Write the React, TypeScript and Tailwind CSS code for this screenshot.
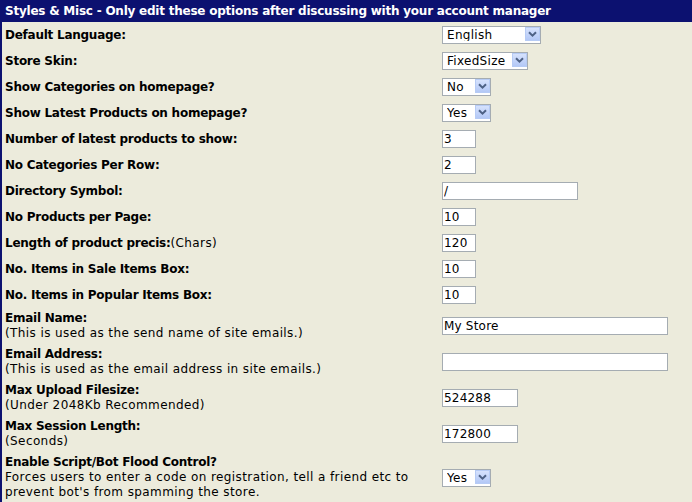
import React from 'react';

type Field =
  | { kind: 'select'; value: string; w: string }
  | { kind: 'input'; value: string; w: string };

interface Row {
  label: string;
  suffix?: string;
  note?: string[];
  field: Field;
}

const rows: Row[] = [
  { label: 'Default Language:', field: { kind: 'select', value: 'English', w: 'w-[99px]' } },
  { label: 'Store Skin:', field: { kind: 'select', value: 'FixedSize', w: 'w-[86px]' } },
  { label: 'Show Categories on homepage?', field: { kind: 'select', value: 'No', w: 'w-[49px]' } },
  { label: 'Show Latest Products on homepage?', field: { kind: 'select', value: 'Yes', w: 'w-[49px]' } },
  { label: 'Number of latest products to show:', field: { kind: 'input', value: '3', w: 'w-[34px]' } },
  { label: 'No Categories Per Row:', field: { kind: 'input', value: '2', w: 'w-[34px]' } },
  { label: 'Directory Symbol:', field: { kind: 'input', value: '/', w: 'w-[136px]' } },
  { label: 'No Products per Page:', field: { kind: 'input', value: '10', w: 'w-[34px]' } },
  { label: 'Length of product precis:', suffix: '(Chars)', field: { kind: 'input', value: '120', w: 'w-[34px]' } },
  { label: 'No. Items in Sale Items Box:', field: { kind: 'input', value: '10', w: 'w-[34px]' } },
  { label: 'No. Items in Popular Items Box:', field: { kind: 'input', value: '10', w: 'w-[34px]' } },
  {
    label: 'Email Name:',
    note: ['(This is used as the send name of site emails.)'],
    field: { kind: 'input', value: 'My Store', w: 'w-[226px]' },
  },
  {
    label: 'Email Address:',
    note: ['(This is used as the email address in site emails.)'],
    field: { kind: 'input', value: '', w: 'w-[226px]' },
  },
  {
    label: 'Max Upload Filesize:',
    note: ['(Under 2048Kb Recommended)'],
    field: { kind: 'input', value: '524288', w: 'w-[76px]' },
  },
  {
    label: 'Max Session Length:',
    note: ['(Seconds)'],
    field: { kind: 'input', value: '172800', w: 'w-[76px]' },
  },
  {
    label: 'Enable Script/Bot Flood Control?',
    note: ['Forces users to enter a code on registration, tell a friend etc to', "prevent bot's from spamming the store."],
    field: { kind: 'select', value: 'Yes', w: 'w-[49px]' },
  },
];

const Select = ({ value, w }: { value: string; w: string }) => (
  <div className={`relative h-[18px] ${w}`}>
    <select
      defaultValue={value}
      className="h-full w-full appearance-none rounded-none border border-[#a5acb2] bg-white pl-[4px] text-[12px] leading-none tracking-[0.3px] text-black outline-none"
    >
      <option>{value}</option>
    </select>
    <span className="pointer-events-none absolute right-px top-px flex h-[14px] w-[15px] items-center justify-center border border-[#b6cbf5] bg-gradient-to-b from-[#d6e2fd] to-[#b3c8f6]">
      <svg width="9" height="6" viewBox="0 0 9 6">
        <path d="M1 1.2 L4.5 4.6 L8 1.2" fill="none" stroke="#4d6185" strokeWidth="2" />
      </svg>
    </span>
  </div>
);

const Input = ({ value, w }: { value: string; w: string }) => (
  <input
    defaultValue={value}
    className={`h-[18px] border border-[#a5acb2] bg-white pl-px text-[12px] leading-none tracking-[0.2px] text-black outline-none ${w}`}
  />
);

export default function App() {
  return (
    <div className="h-[502px] w-[692px] overflow-hidden border-l-2 border-[#0c1170] bg-[#ecebdc] font-['DejaVu_Sans',Verdana,sans-serif] text-[12px] leading-[15px] tracking-[0.4px] text-black">
      <div className="flex h-[22px] items-center bg-[#0c1170] px-[3px] font-bold tracking-[-0.23px] text-white">
        Styles &amp; Misc - Only edit these options after discussing with your account manager
      </div>
      <div className="grid grid-cols-[437px_1fr]">
        {rows.map((r, i) => (
          <React.Fragment key={i}>
            <div className={`flex flex-col justify-center p-[3px] ${r.note ? '' : 'h-[26px]'}`}>
              <div>
                <span className="font-bold tracking-[-0.25px]">{r.label}</span>
                {r.suffix && <span>{r.suffix}</span>}
              </div>
              {r.note?.map((n, j) => (
                <div key={j}>{n}</div>
              ))}
            </div>
            <div className="flex items-center p-[3px]">
              {r.field.kind === 'select' ? (
                <Select value={r.field.value} w={r.field.w} />
              ) : (
                <Input value={r.field.value} w={r.field.w} />
              )}
            </div>
          </React.Fragment>
        ))}
      </div>
    </div>
  );
}
